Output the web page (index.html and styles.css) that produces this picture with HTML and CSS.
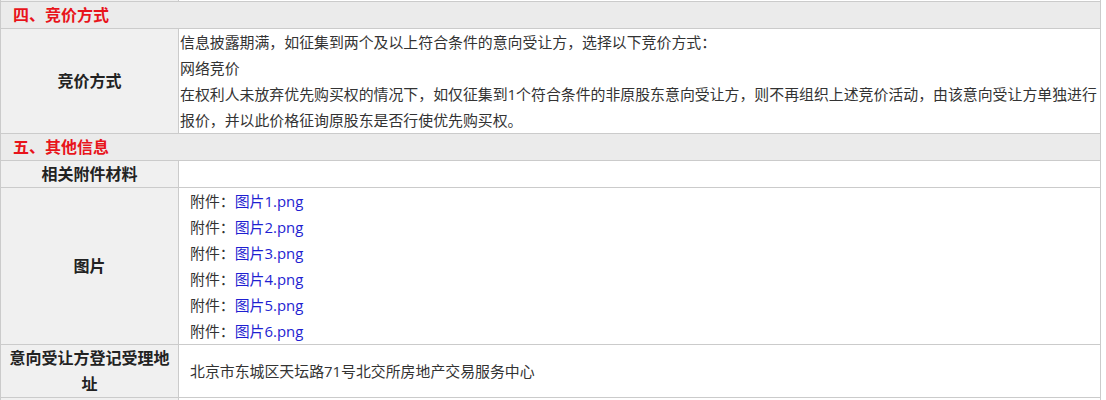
FILE: index.html
```html
<!DOCTYPE html>
<html lang="zh-CN">
<head>
<meta charset="utf-8">
<title>竞价方式</title>
<link rel="stylesheet" href="styles.css">
</head>
<body>
<div class="page">
<table class="info">
  <colgroup><col class="c-label"><col class="c-value"></colgroup>
  <tr class="prev"><td class="label"></td><td class="value"></td></tr>
  <tr><td class="section" colspan="2">四、竞价方式</td></tr>
  <tr>
    <td class="label">竞价方式</td>
    <td class="value">信息披露期满，如征集到两个及以上符合条件的意向受让方，选择以下竞价方式：<br>网络竞价<br>在权利人未放弃优先购买权的情况下，如仅征集到1个符合条件的非原股东意向受让方，则不再组织上述竞价活动，由该意向受让方单独进行报价，并以此价格征询原股东是否行使优先购买权。</td>
  </tr>
  <tr><td class="section" colspan="2">五、其他信息</td></tr>
  <tr>
    <td class="label">相关附件材料</td>
    <td class="value"></td>
  </tr>
  <tr>
    <td class="label">图片</td>
    <td class="value indent">
      <div class="file">附件：<a href="#">图片1.png</a></div>
      <div class="file">附件：<a href="#">图片2.png</a></div>
      <div class="file">附件：<a href="#">图片3.png</a></div>
      <div class="file">附件：<a href="#">图片4.png</a></div>
      <div class="file">附件：<a href="#">图片5.png</a></div>
      <div class="file">附件：<a href="#">图片6.png</a></div>
    </td>
  </tr>
  <tr>
    <td class="label">意向受让方登记受理地址</td>
    <td class="value indent">北京市东城区天坛路71号北交所房地产交易服务中心</td>
  </tr>
  <tr class="next"><td class="label"></td><td class="value"></td></tr>
</table>
</div>
</body>
</html>
```

FILE: styles.css
```css
html, body {
  margin: 0;
  padding: 0;
  background: #fff;
}
body {
  font-family: "Open Sans", "Noto Sans CJK SC", sans-serif;
  font-size: 14.9px;
  line-height: 26px;
  color: #333;
}
.page {
  margin-top: -26px;
}
.info {
  border-collapse: collapse;
  width: 1101px;
  table-layout: fixed;
}
.c-label { width: 178px; }
.info td {
  border: 1px solid #cbcbcb;
  padding: 0;
  vertical-align: middle;
}
.info .section {
  background: #ebebeb;
  color: #e8141b;
  font-weight: bold;
  font-size: 16px;
  padding-left: 12px;
  height: 26px;
}
.info .label {
  background: #f0f0f0;
  font-weight: bold;
  font-size: 16px;
  color: #222;
  text-align: center;
  padding: 0 5px;
  height: 26px;
}
.info .value {
  background: #fff;
  padding: 0 0 0 1px;
  height: 26px;
}
.info .value.indent {
  padding-left: 11px;
}
.prev td { height: 26px; }
.next td { height: 26px; }
.file a {
  color: #1f1fd1;
  text-decoration: none;
}
```
